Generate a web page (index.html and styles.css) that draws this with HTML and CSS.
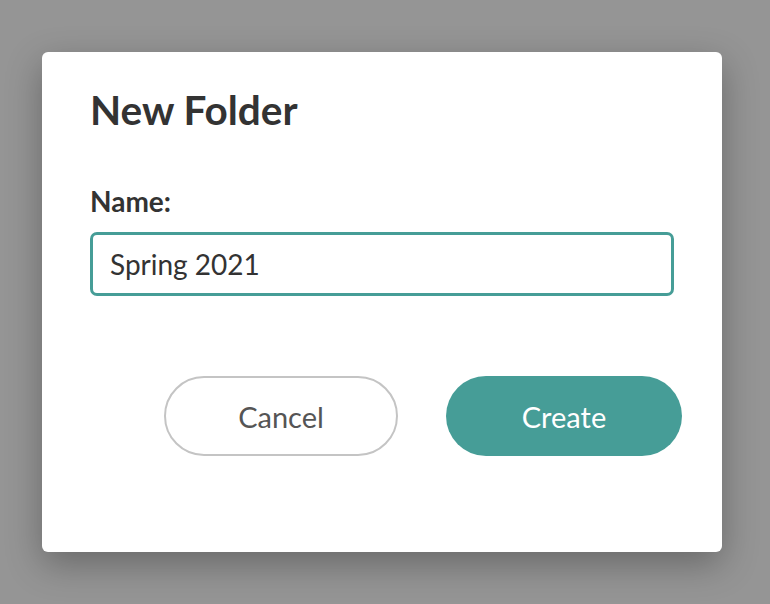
FILE: index.html
```html
<!DOCTYPE html>
<html>
<head>
<meta charset="utf-8">
<link rel="stylesheet" href="styles.css">
</head>
<body>
<div class="dialog">
  <h1 class="title">New Folder</h1>
  <label class="label" for="name">Name:</label>
  <input id="name" class="input" type="text" value="Spring 2021">
  <div class="actions">
    <button class="btn btn-cancel">Cancel</button>
    <button class="btn btn-create">Create</button>
  </div>
</div>
</body>
</html>
```
FILE: styles.css
```css
html, body {
  margin: 0;
  padding: 0;
  height: 100%;
}
body {
  background: #959595;
  font-family: Lato, "Noto Sans", sans-serif;
  overflow: hidden;
}
.dialog {
  box-sizing: border-box;
  width: 680px;
  height: 500px;
  margin: 52px 0 0 42px;
  background: #fff;
  border-radius: 6px;
  box-shadow: 0 12px 36px rgba(0, 0, 0, 0.3);
  padding: 34px 48px 0 48px;
  display: flex;
  flex-direction: column;
}
.title {
  margin: 0;
  font-size: 40.5px;
  line-height: 48px;
  font-weight: 700;
  color: #333;
}
.label {
  margin-top: 50px;
  font-size: 28px;
  line-height: 34px;
  font-weight: 700;
  color: #333;
}
.input {
  box-sizing: border-box;
  margin-top: 14px;
  width: 584px;
  height: 64px;
  border: 3px solid #469d97;
  border-radius: 7px;
  padding: 0 17px;
  font-family: Lato, "Noto Sans", sans-serif;
  font-size: 28px;
  color: #333;
  outline: none;
}
.actions {
  display: flex;
  justify-content: flex-end;
  gap: 48px;
  margin-top: 80px;
  margin-right: -8px;
}
.btn {
  box-sizing: border-box;
  height: 80px;
  border-radius: 40px;
  font-family: Lato, "Noto Sans", sans-serif;
  font-size: 29px;
  cursor: pointer;
}
.btn-cancel {
  width: 234px;
  background: #fff;
  border: 2px solid #c4c4c4;
  color: #555;
}
.btn-create {
  width: 236px;
  background: #469d97;
  border: none;
  color: #fff;
}
```
